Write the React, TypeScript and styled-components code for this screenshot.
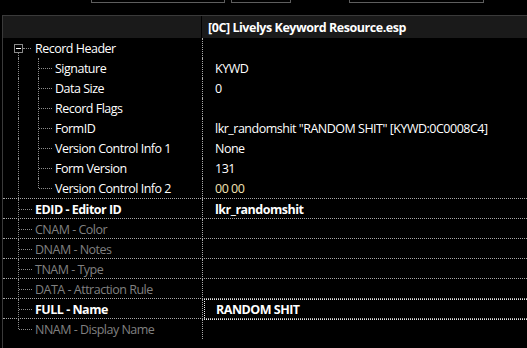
import React from "react";
import styled, { createGlobalStyle, css } from "styled-components";

const GlobalStyle = createGlobalStyle`
  html, body {
    margin: 0;
    padding: 0;
    background: #000;
  }
  body {
    font-family: "Open Sans", "Noto Sans", sans-serif;
    font-size: 12.5px;
    color: #fff;
  }
`;

type Guide = "pass" | "tee" | "end" | "root" | "none";
type Tone = "normal" | "bold" | "dim";

interface Field {
  label: string;
  value?: string;
  guides: Guide[];
  tone?: Tone;
  valueTone?: "normal" | "bold" | "hex";
  focused?: boolean;
}

const headerFields: Field[] = [
  { label: "Record Header", guides: ["root"] },
  { label: "Signature", value: "KYWD", guides: ["pass", "tee"] },
  { label: "Data Size", value: "0", guides: ["pass", "tee"] },
  { label: "Record Flags", guides: ["pass", "tee"] },
  { label: "FormID", value: 'lkr_randomshit "RANDOM SHIT" [KYWD:0C0008C4]', guides: ["pass", "tee"] },
  { label: "Version Control Info 1", value: "None", guides: ["pass", "tee"] },
  { label: "Form Version", value: "131", guides: ["pass", "tee"] },
  { label: "Version Control Info 2", value: "00 00", valueTone: "hex", guides: ["pass", "end"] },
];

const fields: Field[] = [
  { label: "EDID - Editor ID", value: "lkr_randomshit", tone: "bold", valueTone: "bold", guides: ["tee"] },
  { label: "CNAM - Color", tone: "dim", guides: ["tee"] },
  { label: "DNAM - Notes", tone: "dim", guides: ["tee"] },
  { label: "TNAM - Type", tone: "dim", guides: ["tee"] },
  { label: "DATA - Attraction Rule", tone: "dim", guides: ["tee"] },
  { label: "FULL - Name", value: "RANDOM SHIT", tone: "bold", valueTone: "bold", focused: true, guides: ["tee"] },
  { label: "NNAM - Display Name", tone: "dim", guides: ["end"] },
];

const Page = styled.div`
  width: 527px;
  height: 348px;
  overflow: hidden;
  background: #000;
`;

const Toolbar = styled.div`
  display: flex;
  align-items: flex-end;
  height: 3px;
  padding-left: 91px;
  overflow: hidden;
`;

const ToolButton = styled.div<{ $w: number; $gap: number }>`
  width: ${(p) => p.$w}px;
  height: 3px;
  margin-left: ${(p) => p.$gap}px;
  box-sizing: border-box;
  border: 1px solid #5e5e5e;
  border-top: none;
`;

const Panel = styled.div`
  margin: 12px 0 0 2px;
  height: 333px;
  border-top: 1px solid #3a3a3a;
  border-left: 1px solid #3a3a3a;
`;

const Header = styled.div`
  display: flex;
  height: 22px;
  background: #1a1a1a;
`;

const HeaderSpacer = styled.div`
  width: 198px;
  border-right: 1px solid #000;
`;

const HeaderTitle = styled.div`
  padding: 1px 0 0 6px;
  font-weight: 700;
  line-height: 21px;
  letter-spacing: -0.45px;
  white-space: nowrap;
`;

const Group = styled.div`
  border-bottom: 1px dotted #a8a8a8;
`;

const Row = styled.div<{ $sep?: boolean }>`
  display: grid;
  grid-template-columns: 199px 1fr;
  height: 20px;
  box-sizing: border-box;
  ${(p) =>
    p.$sep &&
    css`
      border-bottom: 1px dotted #a8a8a8;
    `}
`;

const LabelCell = styled.div`
  display: flex;
  align-items: stretch;
  padding-left: 5px;
  min-width: 0;
`;

const GuideCell = styled.span<{ $kind: Guide }>`
  position: relative;
  flex: none;
  width: 20px;

  &::before {
    content: "";
    position: absolute;
    left: 10px;
    border-left: 1px dotted #8c8c8c;
    ${(p) =>
      p.$kind === "pass" || p.$kind === "tee"
        ? css`
            top: 0;
            bottom: 0;
          `
        : p.$kind === "end"
        ? css`
            top: 0;
            height: 10px;
          `
        : p.$kind === "root"
        ? css`
            top: 15px;
            bottom: 0;
          `
        : css`
            display: none;
          `}
  }

  &::after {
    content: "";
    position: absolute;
    top: 10px;
    border-top: 1px dotted #8c8c8c;
    ${(p) =>
      p.$kind === "tee" || p.$kind === "end"
        ? css`
            left: 11px;
            width: 13px;
          `
        : p.$kind === "root"
        ? css`
            left: 15px;
            width: 8px;
          `
        : css`
            display: none;
          `}
  }
`;

const Expander = styled.span`
  position: absolute;
  left: 6px;
  top: 6px;
  width: 9px;
  height: 9px;
  box-sizing: border-box;
  border: 1px solid #8a8a8a;
  background: #000;

  &::after {
    content: "";
    position: absolute;
    left: 1px;
    top: 3px;
    width: 5px;
    height: 1px;
    background: #fff;
  }
`;

const toneColor: Record<Tone, string> = {
  normal: "#ffffff",
  bold: "#ffffff",
  dim: "#808080",
};

const Label = styled.span<{ $tone: Tone }>`
  margin-left: 7px;
  padding-top: 1px;
  line-height: 19px;
  white-space: nowrap;
  letter-spacing: -0.5px;
  color: ${(p) => toneColor[p.$tone]};
  font-weight: ${(p) => (p.$tone === "bold" ? 700 : 400)};
`;

const ValueCell = styled.div`
  display: flex;
  border-left: 1px dotted #a8a8a8;
  min-width: 0;
`;

const FocusBox = styled.div<{ $focused?: boolean }>`
  flex: 1;
  display: flex;
  align-items: center;
  padding: 1px 0 0 12px;
  box-sizing: border-box;
  ${(p) =>
    p.$focused &&
    css`
      margin-left: 1px;
      padding-left: 11px;
      border: 1px dotted #e6e6e6;
      border-right: none;
      margin-bottom: -1px;
    `}
`;

const Value = styled.span<{ $tone: "normal" | "bold" | "hex" }>`
  white-space: nowrap;
  letter-spacing: -0.5px;
  line-height: 18px;
  color: ${(p) => (p.$tone === "hex" ? "#f3e3b4" : "#ffffff")};
  font-weight: ${(p) => (p.$tone === "bold" ? 700 : 400)};
`;

function FieldRow({ field, sep }: { field: Field; sep?: boolean }) {
  return (
    <Row $sep={sep}>
      <LabelCell>
        {field.guides.map((g, i) => (
          <GuideCell key={i} $kind={g}>
            {g === "root" && <Expander />}
          </GuideCell>
        ))}
        <Label $tone={field.tone ?? "normal"}>{field.label}</Label>
      </LabelCell>
      <ValueCell>
        <FocusBox $focused={field.focused}>
          {field.value && <Value $tone={field.valueTone ?? "normal"}>{field.value}</Value>}
        </FocusBox>
      </ValueCell>
    </Row>
  );
}

export default function App() {
  return (
    <Page>
      <GlobalStyle />
      <Toolbar>
        <ToolButton $w={134} $gap={0} />
        <ToolButton $w={60} $gap={6} />
        <ToolButton $w={135} $gap={58} />
      </Toolbar>
      <Panel>
        <Header>
          <HeaderSpacer />
          <HeaderTitle>[0C] Livelys Keyword Resource.esp</HeaderTitle>
        </Header>
        <Group>
          {headerFields.map((f) => (
            <FieldRow key={f.label} field={f} />
          ))}
        </Group>
        {fields.map((f, i) => (
          <FieldRow key={f.label} field={f} sep={i < fields.length - 1} />
        ))}
      </Panel>
    </Page>
  );
}
